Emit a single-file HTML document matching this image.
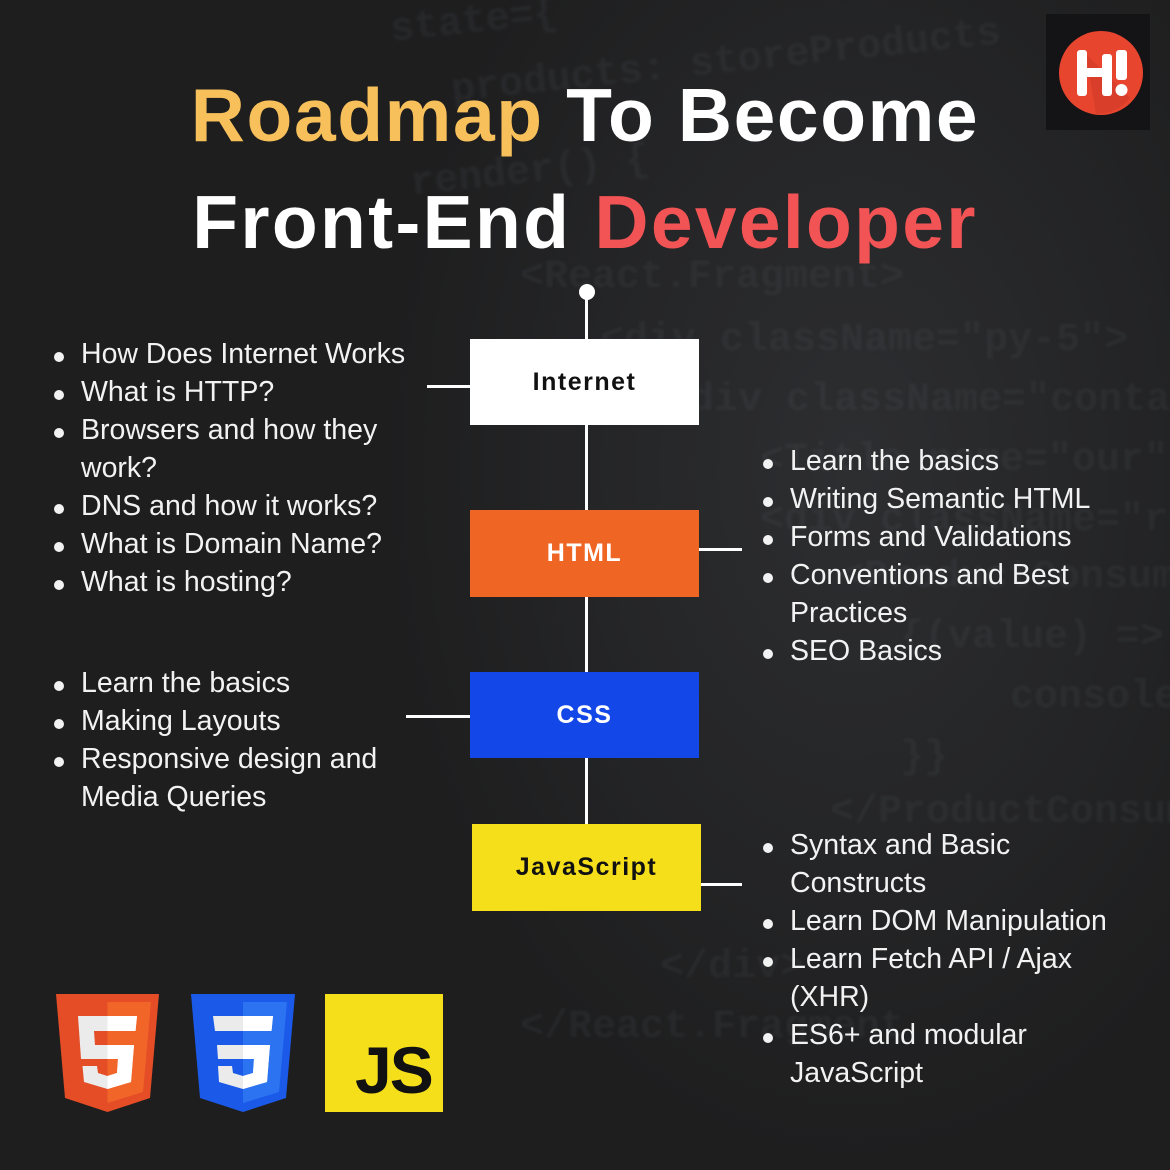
<!DOCTYPE html>
<html><head><meta charset="utf-8">
<style>
html,body{margin:0;padding:0;}
body{width:1170px;height:1170px;position:relative;overflow:hidden;background:#1e1e1f;font-family:"Liberation Sans",sans-serif;}
.code{position:absolute;font-family:"Liberation Mono",monospace;font-size:40px;color:rgba(120,130,140,0.09);white-space:nowrap;font-weight:bold;filter:blur(1.2px);}
.title{position:absolute;left:0;width:1170px;text-align:center;font-weight:bold;font-size:75px;color:#fff;}
.box{position:absolute;display:flex;align-items:center;justify-content:center;font-weight:bold;font-size:25px;letter-spacing:1.5px;}
.line{position:absolute;background:#fff;}
.li{position:absolute;color:#f2f2f2;font-size:28.5px;white-space:nowrap;}
.li.b::before{content:"";position:absolute;left:-27px;top:14px;width:10px;height:10px;border-radius:50%;background:#f2f2f2;}
</style></head><body>
<div style="position:absolute;left:380px;top:0;width:790px;height:1170px;background:radial-gradient(ellipse at 60% 40%,rgba(60,62,66,0.5),rgba(30,30,31,0) 70%);"></div>
<div class="code" style="left:390px;top:0;transform:rotate(-6deg)">state={</div>
<div class="code" style="left:450px;top:40px;transform:rotate(-6deg)">products: storeProducts</div>
<div class="code" style="left:410px;top:150px;transform:rotate(-6deg)">render() {</div>
<div class="code" style="left:520px;top:255px;">&lt;React.Fragment&gt;</div>
<div class="code" style="left:600px;top:318px;">&lt;div className="py-5"&gt;</div>
<div class="code" style="left:690px;top:378px;">div className="containe</div>
<div class="code" style="left:760px;top:438px;">&lt;Title name="our" ti</div>
<div class="code" style="left:760px;top:498px;">&lt;div className="row"</div>
<div class="code" style="left:840px;top:555px;">&lt;ProductConsumer</div>
<div class="code" style="left:900px;top:615px;">{(value) =&gt; {</div>
<div class="code" style="left:1010px;top:675px;">console</div>
<div class="code" style="left:900px;top:735px;">}}</div>
<div class="code" style="left:830px;top:790px;">&lt;/ProductConsumer</div>
<div class="code" style="left:660px;top:945px;">&lt;/div&gt;</div>
<div class="code" style="left:520px;top:1005px;">&lt;/React.Fragment</div>

<div class="title" style="top:72px;letter-spacing:1.6px;"><span style="color:#f8c05a">Roadmap</span> To Become</div>
<div class="title" style="top:179px;letter-spacing:2.3px;">Front-End <span style="color:#f25456">Developer</span></div>

<div style="position:absolute;left:1046px;top:14px;width:104px;height:116px;background:#141416;"></div>
<svg style="position:absolute;left:1056px;top:28px" width="90" height="90" viewBox="0 0 90 90">
<circle cx="45" cy="45" r="42" fill="#e8452f"/>
<path d="M30 26 L74 70 A42 42 0 0 1 40 86 Z" fill="#c83724" opacity="0.5"/>
<rect x="21" y="22" width="10" height="46" rx="3" fill="#fff"/>
<rect x="28" y="40" width="22" height="9" fill="#fff"/>
<rect x="46" y="26" width="10" height="42" rx="3" fill="#fff"/>
<rect x="60" y="22" width="11" height="30" rx="3" fill="#fff"/>
<circle cx="65.5" cy="62" r="6" fill="#fff"/>
</svg>

<div class="line" style="left:585px;top:292px;width:3px;height:540px;"></div>
<div style="position:absolute;left:579px;top:284px;width:16px;height:16px;border-radius:50%;background:#fff;"></div>

<div class="box" style="left:470px;top:339px;width:229px;height:86px;background:#fff;color:#111;">Internet</div>
<div class="box" style="left:470px;top:510px;width:229px;height:87px;background:#ee6524;color:#fff;">HTML</div>
<div class="box" style="left:470px;top:672px;width:229px;height:86px;background:#1447e8;color:#fff;">CSS</div>
<div class="box" style="left:472px;top:824px;width:229px;height:87px;background:#f5df1b;color:#111;">JavaScript</div>

<div class="line" style="left:427px;top:385px;width:43px;height:3px;"></div>
<div class="line" style="left:699px;top:548px;width:43px;height:3px;"></div>
<div class="line" style="left:406px;top:715px;width:64px;height:3px;"></div>
<div class="line" style="left:701px;top:883px;width:41px;height:3px;"></div>

<div class="li b" style="left:81px;top:338px;">How Does Internet Works</div>
<div class="li b" style="left:81px;top:376px;">What is HTTP?</div>
<div class="li b" style="left:81px;top:414px;">Browsers and how they</div>
<div class="li" style="left:81px;top:452px;">work?</div>
<div class="li b" style="left:81px;top:490px;">DNS and how it works?</div>
<div class="li b" style="left:81px;top:528px;">What is Domain Name?</div>
<div class="li b" style="left:81px;top:566px;">What is hosting?</div>

<div class="li b" style="left:790px;top:445px;">Learn the basics</div>
<div class="li b" style="left:790px;top:483px;">Writing Semantic HTML</div>
<div class="li b" style="left:790px;top:521px;">Forms and Validations</div>
<div class="li b" style="left:790px;top:559px;">Conventions and Best</div>
<div class="li" style="left:790px;top:597px;">Practices</div>
<div class="li b" style="left:790px;top:635px;">SEO Basics</div>

<div class="li b" style="left:81px;top:667px;">Learn the basics</div>
<div class="li b" style="left:81px;top:705px;">Making Layouts</div>
<div class="li b" style="left:81px;top:743px;">Responsive design and</div>
<div class="li" style="left:81px;top:781px;">Media Queries</div>

<div class="li b" style="left:790px;top:829px;">Syntax and Basic</div>
<div class="li" style="left:790px;top:867px;">Constructs</div>
<div class="li b" style="left:790px;top:905px;">Learn DOM Manipulation</div>
<div class="li b" style="left:790px;top:943px;">Learn Fetch API / Ajax</div>
<div class="li" style="left:790px;top:981px;">(XHR)</div>
<div class="li b" style="left:790px;top:1019px;">ES6+ and modular</div>
<div class="li" style="left:790px;top:1057px;">JavaScript</div>

<svg style="position:absolute;left:56px;top:994px" width="103" height="118" viewBox="0 0 103 118">
<path d="M0 0 H103 L94 104 L51.5 118 L9 104 Z" fill="#e44d26"/>
<path d="M51.5 8 H95 L87 98 L51.5 109 Z" fill="#f16529"/>
<path d="M22 22 H81 L79.5 37 H38 L39 51 H78 L75 88 L51.5 95 L28 88 L26.5 72 H41 L42 79 L51.5 82 L61 79 L62 65 H25 Z" fill="#ebebeb"/>
<path d="M51.5 22 H81 L79.5 37 H51.5 Z M51.5 51 H78 L75 88 L51.5 95 V82 L61 79 L62 65 H51.5 Z" fill="#fff"/>
</svg>
<svg style="position:absolute;left:191px;top:994px" width="104" height="118" viewBox="0 0 104 118">
<path d="M0 0 H104 L95 104 L52 118 L9 104 Z" fill="#1b5ae8"/>
<path d="M52 8 H96 L88 98 L52 109 Z" fill="#2b73f0"/>
<path d="M22 22 H82 L80.5 37 H24 Z M26 51 H79 L76 88 L52 95 L28 88 L27 72 H41 L42 79 L52 82 L62 79 L63 65 H27 Z" fill="#ebebeb"/>
<path d="M52 22 H82 L80.5 37 H52 Z M52 51 H79 L76 88 L52 95 V82 L62 79 L63 65 H52 Z" fill="#fff"/>
</svg>
<div style="position:absolute;left:325px;top:994px;width:118px;height:118px;background:#f5df1b;"></div>
<div style="position:absolute;left:355px;top:1032px;font-weight:bold;font-size:66px;color:#111;letter-spacing:-2px;line-height:76px;">JS</div>
</body></html>
